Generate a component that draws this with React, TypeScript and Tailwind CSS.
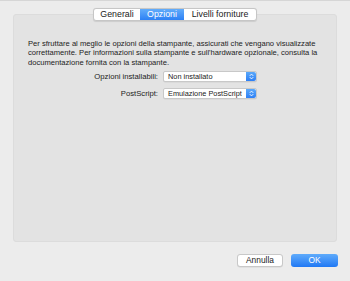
import React from "react";

const font = { fontFamily: '"Liberation Sans", Arial, sans-serif' };

function Chevrons() {
  return (
    <svg width="5" height="7" viewBox="0 0 5 7" fill="none" stroke="white" strokeWidth="0.9" strokeLinecap="round" strokeLinejoin="round">
      <path d="M1 2.6 L2.5 1.1 L4 2.6" />
      <path d="M1 4.4 L2.5 5.9 L4 4.4" />
    </svg>
  );
}

function Select({ value }: { value: string }) {
  return (
    <div className="flex h-[11px] w-[94px] items-stretch rounded-[2px] border border-[#c8c8c8] bg-white shadow-[0_0.5px_0.5px_rgba(0,0,0,0.08)]">
      <div className="flex flex-1 items-center overflow-hidden whitespace-nowrap pl-[4px] text-[7.35px] leading-none text-[#222]">{value}</div>
      <div className="flex w-[10px] items-center justify-center rounded-r-[2px] bg-gradient-to-b from-[#5aa8fa] to-[#2d7ff5]">
        <Chevrons />
      </div>
    </div>
  );
}

export default function App() {
  return (
    <div className="h-[281px] w-[350px] bg-[#ececec]" style={font}>
      <div className="h-[1px] bg-[#d6d6d6]" />
      <div className="px-[13px] pt-[13px]">
        <div className="relative h-[228px] rounded-[3px] border border-[#dcdcdc] bg-[#e3e3e3]">
          <div className="absolute left-1/2 top-[-7px] flex h-[13px] -translate-x-1/2 rounded-[3px] border border-[#c6c6c6] bg-white text-[8.8px] leading-none shadow-[0_0.5px_1px_rgba(0,0,0,0.1)]">
            <div className="flex w-[46px] items-center justify-center text-[#222]">Generali</div>
            <div className="flex w-[44px] items-center justify-center bg-gradient-to-b from-[#62acfa] to-[#2c80f5] text-white">Opzioni</div>
            <div className="flex w-[72px] items-center justify-center text-[#222]">Livelli forniture</div>
          </div>
          <div className="pl-[14px] pr-[10px] pt-[24px] text-[7.6px] leading-[9.4px] text-[#222]">
            Per sfruttare al meglio le opzioni della stampante, assicurati che vengano visualizzate correttamente. Per informazioni sulla stampante e sull'hardware opzionale, consulta la documentazione fornita con la stampante.
          </div>
          <div className="mt-[4px] flex flex-col gap-[6px]">
            <div className="flex items-center">
              <div className="w-[149px] pr-[5px] text-right text-[7.7px] leading-none text-[#222]">Opzioni installabili:</div>
              <Select value="Non installato" />
            </div>
            <div className="flex items-center">
              <div className="w-[149px] pr-[5px] text-right text-[7.7px] leading-none text-[#222]">PostScript:</div>
              <Select value="Emulazione PostScript" />
            </div>
          </div>
        </div>
      </div>
      <div className="flex justify-end gap-[8px] pr-[12px] pt-[12px]">
        <div className="flex h-[13px] w-[46px] items-center justify-center rounded-[3px] border border-[#c8c8c8] bg-white text-[8.4px] leading-none text-[#222] shadow-[0_0.5px_0.5px_rgba(0,0,0,0.1)]">Annulla</div>
        <div className="flex h-[13px] w-[47px] items-center justify-center rounded-[3px] bg-gradient-to-b from-[#5fabfb] to-[#1f78f4] text-[8.4px] leading-none text-white">OK</div>
      </div>
    </div>
  );
}
